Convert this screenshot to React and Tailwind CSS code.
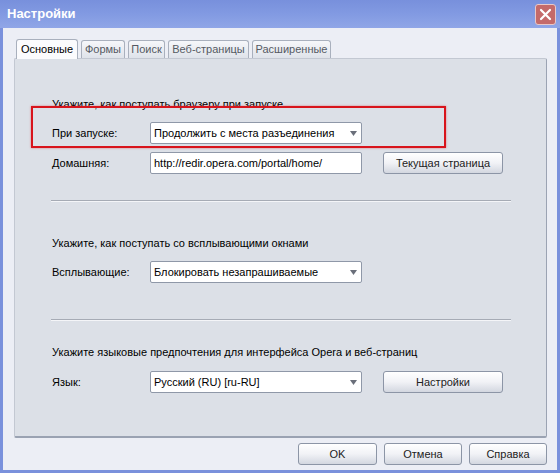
import React from "react";

const font = { fontFamily: '"Liberation Sans", Arial, sans-serif' };

function Select({ value }) {
  return (
    <div className="relative w-[212px] h-[22px] bg-white border border-[#8f98a8] rounded-[2px] flex items-center pl-[3px] text-[11px] text-black whitespace-nowrap">
      <span>{value}</span>
      <svg className="absolute right-[4px] top-[8px]" width="7" height="5" viewBox="0 0 7 5">
        <path d="M0 0H7L3.5 5Z" fill="#6a6f7a" />
      </svg>
    </div>
  );
}

function Input({ value }) {
  return (
    <div className="w-[212px] h-[22px] bg-white border border-[#8f98a8] rounded-[2px] flex items-center pl-[3px] text-[11px] text-black whitespace-nowrap">
      {value}
    </div>
  );
}

function Btn({ children, w = "w-[120px]" }) {
  return (
    <div className={`${w} h-[22px] rounded-[3px] border border-[#8c95a6] bg-gradient-to-b from-[#ffffff] via-[#f1f2f6] to-[#d3d7e0] flex items-center justify-center text-[11px] text-[#222] whitespace-nowrap`}>
      {children}
    </div>
  );
}

function Row({ label, children }) {
  return (
    <div className="flex items-center">
      <div className="w-[98px] text-[11px] text-black">{label}</div>
      {children}
    </div>
  );
}

function Sep() {
  return <div className="ml-[36px] w-[460px] h-[2px] border-t border-[#a6abb5] border-b border-b-[#f4f5f8]" />;
}

export default function App() {
  const tabs = [
    ["Формы", "w-[44px]"],
    ["Поиск", "w-[37px]"],
    ["Веб-страницы", "w-[81px]"],
    ["Расширенные", "w-[79px]"],
  ];
  return (
    <div style={font} className="w-[560px] h-[473px] flex flex-col bg-[#7a91dc]">
      <div className="h-[28px] flex items-center justify-between pl-[7px] pr-[4px] bg-gradient-to-b from-[#7890dc] via-[#829ae2] to-[#90a6e7]">
        <span className="text-white font-bold text-[13px]">Настройки</span>
        <div className="w-[21px] h-[21px] rounded-[3px] bg-[#c46a6a] border border-[#e8c8c8] flex items-center justify-center">
          <svg width="13" height="13" viewBox="0 0 13 13">
            <path d="M2 2L11 11M11 2L2 11" stroke="white" strokeWidth="2.2" strokeLinecap="round" />
          </svg>
        </div>
      </div>
      <div className="flex-1 ml-[3px] mr-[3px] mb-[3px] bg-[#eceef5] flex flex-col">
        <div className="flex items-end pl-[13px] pt-[10px] h-[30px] gap-[3px]">
          <div className="w-[62px] h-[20px] bg-[#fbfbfd] border border-[#a9b0bd] border-b-0 rounded-t-[3px] flex items-center justify-center text-[11px] text-black relative z-10 mb-[-1px] whitespace-nowrap">
            Основные
          </div>
          {tabs.map(([t, w]) => (
            <div key={t} className={`${w} h-[18px] bg-gradient-to-b from-[#f6f7fa] to-[#dfe3ea] border border-[#a9b0bd] border-b-0 rounded-t-[3px] flex items-center justify-center text-[11px] text-[#555a63] whitespace-nowrap`}>
              {t}
            </div>
          ))}
        </div>
        <div className="relative ml-[11px] w-[533px] h-[380px] bg-[#dce0e7] border border-[#c3c8d2] border-r-[#9ba3b3] border-b-2 border-b-[#9aa2b2] rounded-[2px] flex flex-col pt-[38px]">
          <div className="pl-[37px] h-[14px] leading-[14px] text-[11px] text-black">Укажите, как поступать браузеру при запуске.</div>
          <div className="pl-[37px] mt-[11px]">
            <Row label="При запуске:"><Select value="Продолжить с места разъединения" /></Row>
          </div>
          <div className="pl-[37px] mt-[8px]">
            <Row label="Домашняя:">
              <Input value="http://redir.opera.com/portal/home/" />
              <div className="ml-[21px]"><Btn>Текущая страница</Btn></div>
            </Row>
          </div>
          <div className="mt-[26px]"><Sep /></div>
          <div className="pl-[37px] mt-[34px] h-[14px] leading-[14px] text-[11px] text-black">Укажите, как поступать со всплывающими окнами</div>
          <div className="pl-[37px] mt-[11px]">
            <Row label="Всплывающие:"><Select value="Блокировать незапрашиваемые" /></Row>
          </div>
          <div className="mt-[36px]"><Sep /></div>
          <div className="pl-[37px] mt-[24px] h-[14px] leading-[14px] text-[11px] text-black">Укажите языковые предпочтения для интерфейса Opera и веб-страниц</div>
          <div className="pl-[37px] mt-[12px]">
            <Row label="Язык:">
              <Select value="Русский (RU) [ru-RU]" />
              <div className="ml-[21px]"><Btn>Настройки</Btn></div>
            </Row>
          </div>
          <div className="absolute left-[16px] top-[47px] w-[415px] h-[42px] border-2 border-[#d8141c] shadow-[0_0_2px_rgba(216,20,28,0.5)]" />
        </div>
        <div className="flex justify-end gap-[7px] pr-[10px] mt-[5px]">
          <Btn w="w-[79px]">OK</Btn>
          <Btn w="w-[78px]">Отмена</Btn>
          <Btn w="w-[78px]">Справка</Btn>
        </div>
      </div>
    </div>
  );
}
